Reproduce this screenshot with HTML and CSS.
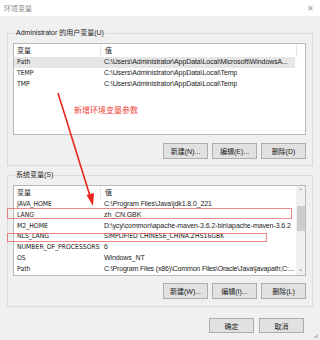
FILE: index.html
```html
<!DOCTYPE html>
<html lang="zh-CN">
<head>
    <meta charset="UTF-8">
    <title>环境变量</title>
    <link rel="stylesheet" href="styles.css">
</head>
<body>
    <div class="window">
        <div class="titlebar">
            <span class="title">环境变量</span>
            <span class="close">✕</span>
        </div>

        <div class="content">
            <fieldset class="group group-user">
                <legend>Administrator 的用户变量(U)</legend>
                <div class="list list-user">
                    <div class="list-main">
                        <div class="row head">
                            <span class="name">变量</span>
                            <span class="value">值</span>
                        </div>
                        <div class="row selected">
                            <span class="name">Path</span>
                            <span class="value">C:\Users\Administrator\AppData\Local\Microsoft\WindowsA...</span>
                        </div>
                        <div class="row">
                            <span class="name">TEMP</span>
                            <span class="value">C:\Users\Administrator\AppData\Local\Temp</span>
                        </div>
                        <div class="row">
                            <span class="name">TMP</span>
                            <span class="value">C:\Users\Administrator\AppData\Local\Temp</span>
                        </div>
                    </div>
                </div>
                <div class="buttons">
                    <button>新建(N)...</button>
                    <button>编辑(E)...</button>
                    <button>删除(D)</button>
                </div>
            </fieldset>

            <fieldset class="group group-system">
                <legend>系统变量(S)</legend>
                <div class="list list-system">
                    <div class="list-main">
                        <div class="row head">
                            <span class="name">变量</span>
                            <span class="value">值</span>
                        </div>
                        <div class="row">
                            <span class="name">JAVA_HOME</span>
                            <span class="value">C:\Program Files\Java\jdk1.8.0_221</span>
                        </div>
                        <div class="row">
                            <span class="name">LANG</span>
                            <span class="value">zh_CN.GBK</span>
                        </div>
                        <div class="row">
                            <span class="name">M2_HOME</span>
                            <span class="value">D:\ycy\common\apache-maven-3.6.2-bin\apache-maven-3.6.2</span>
                        </div>
                        <div class="row">
                            <span class="name">NLS_LANG</span>
                            <span class="value caps">SIMPLIFIED CHINESE_CHINA.ZHS16GBK</span>
                        </div>
                        <div class="row">
                            <span class="name">NUMBER_OF_PROCESSORS</span>
                            <span class="value">6</span>
                        </div>
                        <div class="row">
                            <span class="name">OS</span>
                            <span class="value">Windows_NT</span>
                        </div>
                        <div class="row">
                            <span class="name">Path</span>
                            <span class="value tight">C:\Program Files (x86)\Common Files\Oracle\Java\javapath;C:...</span>
                        </div>
                    </div>
                    <div class="scrollbar">
                        <span class="arrow">&#8963;</span>
                        <span class="thumb"></span>
                        <span class="spacer"></span>
                        <span class="arrow">&#8964;</span>
                    </div>
                </div>
                <div class="buttons">
                    <button>新建(W)...</button>
                    <button>编辑(I)...</button>
                    <button>删除(L)</button>
                </div>
            </fieldset>

            <div class="footer">
                <button>确定</button>
                <button>取消</button>
            </div>
        </div>

        <!-- annotation layer drawn over the dialog -->
        <div class="note">新增环境变量参数</div>
        <div class="mark mark-lang"></div>
        <div class="mark mark-nls"></div>
        <svg class="arrow-layer" width="320" height="340" viewBox="0 0 320 340">
            <line x1="58" y1="93" x2="90" y2="196" stroke="#e8281e" stroke-width="1.6"/>
            <polygon points="93,206 86.5,195 94,193" fill="#e8281e"/>
        </svg>
        <span class="grip"></span>
    </div>
</body>
</html>
```

FILE: styles.css
```css
html, body {
    margin: 0;
    padding: 0;
}
body {
    font-family: "Liberation Sans", "Noto Sans CJK SC", sans-serif;
    font-size: 7px;
    color: #1a1a1a;
    background-color: #f0f0f0;
}
.window {
    position: relative;
    width: 320px;
    height: 340px;
    overflow: hidden;
    background-color: #f0f0f0;
}
.titlebar {
    height: 16px;
    background-color: white;
    display: flex;
    align-items: center;
    justify-content: space-between;
    padding: 0 6px 0 4px;
}
.title {
    color: #888;
    font-size: 7px;
}
.close {
    color: #999;
    font-size: 8px;
}
.content {
    padding: 13px 7px 0 7px;
}
.group {
    margin: 0;
    padding: 6px 6px 6px 5px;
    min-width: 0;
    border: 1px solid #dcdcdc;
}
.group-system {
    margin-top: 5px;
    padding-bottom: 7px;
}
legend {
    padding: 0 1px;
    margin-left: 2px;
    font-size: 7px;
    line-height: 8px;
    color: #222;
}
.list {
    display: flex;
    background-color: white;
    border: 1px solid #b9b9b9;
    overflow: hidden;
}
.list-user {
    height: 90px;
}
.list-system {
    height: 89px;
}
.list-main {
    flex: 1;
    min-width: 0;
    overflow: hidden;
}
.row {
    display: flex;
    height: 10.8px;
    line-height: 10.8px;
    white-space: nowrap;
}
.row.head {
    height: 13px;
    line-height: 13px;
}
.row.selected {
    background-color: #e6e6e6;
    margin-right: 10px;
}
.name {
    width: 83px;
    padding-left: 3px;
    flex-shrink: 0;
    overflow: hidden;
    font-family: "DejaVu Sans Condensed", "Liberation Sans", "Noto Sans CJK SC", sans-serif;
    font-size: 6.8px;
}
.head .name {
    font-family: "Liberation Sans", "Noto Sans CJK SC", sans-serif;
    font-size: 7px;
    border-right: 1px solid #e5e5e5;
}
.value {
    padding-left: 4px;
    overflow: hidden;
    letter-spacing: -0.1px;
}
.value.tight {
    letter-spacing: -0.16px;
}
.value.caps {
    font-family: "DejaVu Sans Condensed", "Liberation Sans", sans-serif;
    font-size: 6.8px;
    letter-spacing: 0;
}
.list-user .head .value {
    width: 191px;
    border-right: 1px solid #e5e5e5;
}
.scrollbar {
    width: 9px;
    display: flex;
    flex-direction: column;
    align-items: center;
    background-color: #f0f0f0;
}
.scrollbar .arrow {
    height: 11px;
    line-height: 11px;
    font-size: 6px;
    color: #606060;
}
.scrollbar .thumb {
    width: 8px;
    height: 25px;
    margin-top: 9px;
    background-color: #cdcdcd;
}
.scrollbar .spacer {
    flex: 1;
}
.buttons {
    display: flex;
    justify-content: flex-end;
    gap: 4px;
    margin-top: 8px;
}
.group-system .buttons {
    margin-top: 7px;
}
button {
    width: 45px;
    height: 16px;
    padding: 0;
    font-family: "Liberation Sans", "Noto Sans CJK SC", sans-serif;
    font-size: 7px;
    color: #1a1a1a;
    background-color: #e1e1e1;
    border: 1px solid #adadad;
}
.footer {
    display: flex;
    justify-content: flex-end;
    gap: 5px;
    margin-top: 11px;
    padding-right: 9px;
}
.footer button {
    height: 15px;
}
.note {
    position: absolute;
    left: 74px;
    top: 104px;
    font-size: 8px;
    color: #f0453a;
}
.mark {
    position: absolute;
    left: 7px;
    border: 1.5px solid rgba(236, 96, 96, 0.75);
}
.mark-lang {
    top: 208px;
    width: 283px;
    height: 9px;
}
.mark-nls {
    top: 233px;
    width: 258px;
    height: 7px;
}
.arrow-layer {
    position: absolute;
    left: 0;
    top: 0;
    pointer-events: none;
}
.grip {
    position: absolute;
    right: 2px;
    bottom: 2px;
    width: 5px;
    height: 5px;
    background: linear-gradient(135deg, transparent 50%, #c8c8c8 50%);
}
```
